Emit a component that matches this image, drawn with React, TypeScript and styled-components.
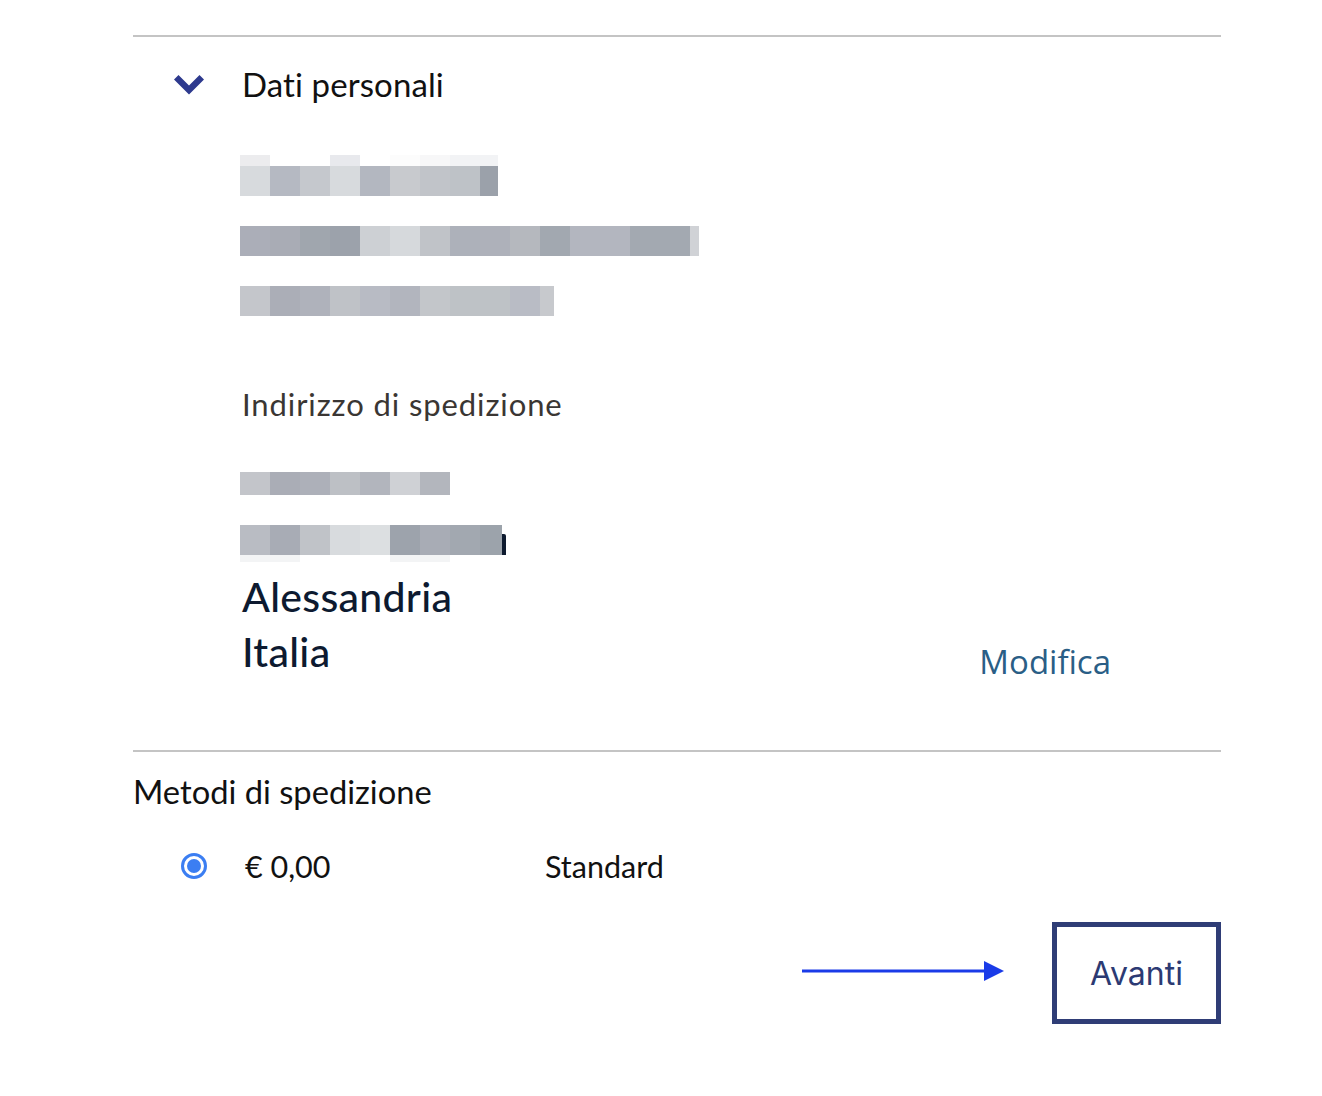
import React from "react";
import styled, { createGlobalStyle } from "styled-components";

const Global = createGlobalStyle`
  html, body { margin: 0; padding: 0; background: #ffffff; }
  body { font-family: "Lato", "Noto Sans", sans-serif; color: #111; }
`;

const Page = styled.div`
  width: 1088px;
  margin-left: 133px;
  padding-top: 35px;
  display: flex;
  flex-direction: column;
`;

const Divider = styled.div`
  height: 2px;
  background: #c4c4c4;
`;

const SectionHeader = styled.div`
  display: flex;
  align-items: center;
  height: 96px;
  padding-left: 41px;
  padding-bottom: 2px;
  box-sizing: border-box;
`;

const Chevron = styled.svg`
  width: 30px;
  height: 20px;
  margin-right: 38px;
  margin-top: 2px;
`;

const HeaderTitle = styled.div`
  font-family: "Lato", sans-serif;
  font-size: 33px;
  color: #111111;
  letter-spacing: 0.1px;
`;

const Body = styled.div`
  padding-left: 107px;
  display: flex;
  flex-direction: column;
`;

const MosaicRow = styled.div<{ $mt: number }>`
  display: flex;
  flex-direction: column;
  margin-top: ${(p) => p.$mt}px;
`;

const CellStrip = styled.div<{ $h: number }>`
  display: flex;
  height: ${(p) => p.$h}px;
`;

const Cell = styled.div<{ $w: number; $c: string }>`
  width: ${(p) => p.$w}px;
  height: 100%;
  background: ${(p) => p.$c};
  flex: none;
`;

const Stroke = styled.div`
  width: 4px;
  height: 21px;
  align-self: flex-end;
  background: #0e1a2f;
  border-radius: 0 2px 0 0;
`;

const SubTitle = styled.div`
  font-family: "Lato", sans-serif;
  font-size: 31px;
  letter-spacing: 0.9px;
  color: #3a3633;
  margin-top: 70px;
  margin-left: 2px;
  height: 36px;
  line-height: 36px;
`;

const AddressBlock = styled.div`
  display: flex;
  align-items: flex-end;
  justify-content: space-between;
  padding-right: 110px;
  margin-top: 7px;
`;

const CityLines = styled.div`
  font-family: "Lato", sans-serif;
  font-size: 41px;
  font-weight: 500;
  color: #0d1a30;
  line-height: 55px;
  margin-left: 2px;
  letter-spacing: 0.3px;
`;

const EditLink = styled.a`
  font-family: "Open Sans", sans-serif;
  font-size: 33px;
  color: #2a5e86;
  text-decoration: none;
  line-height: 40px;
  margin-bottom: -3px;
`;

const Gap = styled.div<{ $h: number }>`
  height: ${(p) => p.$h}px;
`;

const MethodsTitle = styled.div`
  font-family: "Lato", sans-serif;
  font-size: 32.7px;
  color: #111111;
  height: 78px;
  display: flex;
  align-items: center;
`;

const MethodRow = styled.div`
  display: grid;
  grid-template-columns: 64px 300px auto;
  align-items: center;
  height: 72px;
  padding-left: 48px;
`;

const Radio = styled.span`
  width: 26px;
  height: 26px;
  border-radius: 50%;
  border: 3px solid #3b7ef2;
  box-sizing: border-box;
  display: flex;
  align-items: center;
  justify-content: center;
  &::after {
    content: "";
    width: 14px;
    height: 14px;
    border-radius: 50%;
    background: #3b7ef2;
  }
`;

const MethodText = styled.span`
  font-family: "Lato", sans-serif;
  font-size: 30.5px;
  color: #111111;
`;

const Footer = styled.div`
  display: flex;
  justify-content: flex-end;
  align-items: center;
  gap: 46px;
  margin-top: 20px;
`;

const Arrow = styled.svg`
  width: 204px;
  height: 22px;
  margin-bottom: 4px;
`;

const NextButton = styled.button`
  width: 169px;
  height: 102px;
  border: 5px solid #2f3d76;
  background: #ffffff;
  font-family: "Inter", "Lato", sans-serif;
  font-size: 32px;
  color: #2c3a73;
  box-sizing: border-box;
  padding: 0;
`;

type Strip = { h: number; cells: [number, string][] };
type Row = { mt: number; strips: Strip[]; tail?: boolean };

const rows: Row[] = [
  {
    mt: 22,
    strips: [
      {
        h: 11,
        cells: [
          [30, "#ececee"], [60, "#ffffff"], [30, "#e8e9ed"], [30, "#ffffff"],
          [30, "#fcfcfc"], [30, "#f7f7f8"], [30, "#f2f3f5"], [18, "#f2f3f5"],
        ],
      },
      {
        h: 30,
        cells: [
          [30, "#d7dadd"], [30, "#b5b9c2"], [30, "#c5c8cd"], [30, "#d7dadd"],
          [30, "#b3b7c0"], [30, "#c8cace"], [30, "#c1c4c9"], [30, "#bec2c7"],
          [18, "#9ba1aa"],
        ],
      },
    ],
  },
  {
    mt: 30,
    strips: [
      {
        h: 30,
        cells: [
          [30, "#abaeb8"], [30, "#a9acb5"], [30, "#a0a6ae"], [30, "#9ca2ab"],
          [30, "#cdd0d4"], [30, "#d6d9dc"], [30, "#c0c3c8"], [30, "#adb1ba"],
          [30, "#aeb1ba"], [30, "#b5b8be"], [30, "#a2a8b0"], [30, "#b3b6bf"],
          [30, "#b3b6bf"], [60, "#a3a9b1"], [9, "#d0d2d6"],
        ],
      },
    ],
  },
  {
    mt: 30,
    strips: [
      {
        h: 30,
        cells: [
          [30, "#c4c6cb"], [30, "#abaeb7"], [30, "#afb2bb"], [30, "#bfc2c7"],
          [30, "#b8bbc4"], [30, "#b2b5be"], [30, "#c3c6ca"], [30, "#bec2c6"],
          [30, "#bec2c6"], [30, "#b9bcc5"], [14, "#c7c9cd"],
        ],
      },
    ],
  },
];

const addressRows: Row[] = [
  {
    mt: 1,
    strips: [
      {
        h: 23,
        cells: [
          [30, "#c3c5ca"], [30, "#aaadb6"], [30, "#adb0b9"], [30, "#bdc0c5"],
          [30, "#b2b5bd"], [30, "#cfd1d5"], [30, "#b3b6bd"],
        ],
      },
    ],
  },
  {
    mt: 30,
    tail: true,
    strips: [
      {
        h: 30,
        cells: [
          [30, "#b9bcc3"], [30, "#a8acb5"], [30, "#c0c3c8"], [30, "#d8dbde"],
          [30, "#dcdfe1"], [30, "#9da3ac"], [30, "#a8acb5"], [30, "#a2a8b0"],
          [22, "#9ca3ab"],
        ],
      },
      {
        h: 7,
        cells: [[60, "#f3f4f5"], [90, "#ffffff"], [60, "#f3f4f5"]],
      },
    ],
  },
];

function Mosaic({ data }: { data: Row[] }) {
  return (
    <>
      {data.map((r, i) => (
        <MosaicRow key={i} $mt={r.mt}>
          {r.strips.map((s, j) => (
            <CellStrip key={j} $h={s.h}>
              {s.cells.map(([w, c], k) => (
                <Cell key={k} $w={w} $c={c} />
              ))}
              {r.tail && j === 0 ? <Stroke /> : null}
            </CellStrip>
          ))}
        </MosaicRow>
      ))}
    </>
  );
}

export default function App() {
  return (
    <>
      <Global />
      <Page>
        <Divider />
        <SectionHeader>
          <Chevron viewBox="0 0 30 20">
            <path d="M0 4.5 L4.5 0 L15 10.5 L25.5 0 L30 4.5 L15 19.5 Z" fill="#2e3a8e" />
          </Chevron>
          <HeaderTitle>Dati personali</HeaderTitle>
        </SectionHeader>
        <Body>
          <Mosaic data={rows} />
          <SubTitle>Indirizzo di spedizione</SubTitle>
          <Gap $h={49} />
          <Mosaic data={addressRows} />
          <AddressBlock>
            <CityLines>
              Alessandria
              <br />
              Italia
            </CityLines>
            <EditLink href="#">Modifica</EditLink>
          </AddressBlock>
        </Body>
        <Gap $h={71} />
        <Divider />
        <MethodsTitle>Metodi di spedizione</MethodsTitle>
        <MethodRow>
          <Radio />
          <MethodText>€ 0,00</MethodText>
          <MethodText>Standard</MethodText>
        </MethodRow>
        <Footer>
          <Arrow viewBox="0 0 204 22">
            <line x1="0" y1="11" x2="186" y2="11" stroke="#1a3be8" strokeWidth="3" />
            <path d="M182 1 L202 11 L182 21 Z" fill="#1a3be8" />
          </Arrow>
          <NextButton>Avanti</NextButton>
        </Footer>
      </Page>
    </>
  );
}
